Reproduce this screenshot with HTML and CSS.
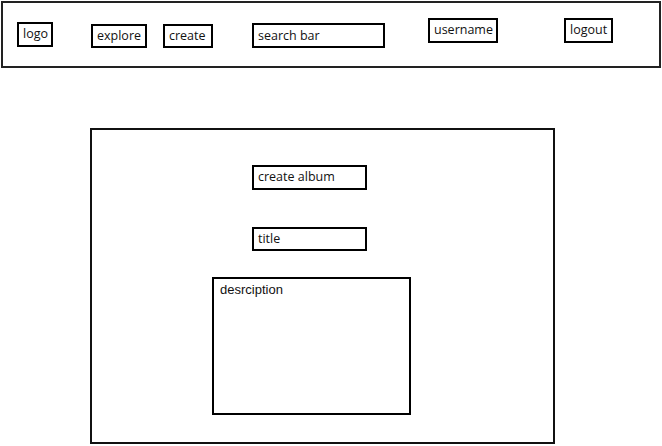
FILE: index.html
```html
<!DOCTYPE html>
<html lang="en">
<head>
    <meta charset="UTF-8">
    <meta name="viewport" content="width=device-width, initial-scale=1.0">
    <title>Create Album - Wireframe</title>
    <link rel="stylesheet" href="styles.css">
</head>
<body>
    <div class="top-bar">
        <div class="box logo">logo</div>
        <div class="box explore">explore</div>
        <div class="box create">create</div>
        <div class="box search">search bar</div>
        <div class="box username">username</div>
        <div class="box logout">logout</div>
    </div>

    <div class="album-panel">
        <div class="box album-heading">create album</div>
        <div class="box album-title">title</div>
        <div class="box album-desc">desrciption</div>
    </div>
</body>
</html>
```

FILE: styles.css
```css
* {
    margin: 0;
    padding: 0;
    box-sizing: border-box;
}

body {
    font-family: "Open Sans", "Liberation Sans", sans-serif;
    background: #fff;
    color: #111;
    width: 662px;
    height: 446px;
    overflow: hidden;
}

.box {
    border: 2px solid #000;
    background: #fff;
    font-size: 12.5px;
    font-weight: 500;
    line-height: 20px;
    padding: 0 4px;
    white-space: nowrap;
}

/* header */
.top-bar {
    display: flex;
    align-items: flex-start;
    margin: 1px 1px 0 1px;
    width: 660px;
    height: 67px;
    border: 2px solid #222;
}

.logo {
    margin: 19px 0 0 14px;
    width: 36px;
    height: 25px;
    line-height: 19px;
}

.explore {
    margin: 21px 0 0 38px;
    width: 56px;
    height: 24px;
}

.create {
    margin: 21px 0 0 16px;
    width: 50px;
    height: 24px;
}

.search {
    margin: 20px 0 0 39px;
    width: 133px;
    height: 25px;
    line-height: 21px;
}

.username {
    margin: 15px 0 0 43px;
    width: 70px;
    height: 25px;
    line-height: 20px;
}

.logout {
    margin: 15px 0 0 66px;
    width: 49px;
    height: 25px;
    line-height: 20px;
}

/* main panel */
.album-panel {
    display: flex;
    flex-direction: column;
    align-items: flex-start;
    margin: 60px 0 0 90px;
    width: 465px;
    height: 316px;
    border: 2px solid #111;
}

.album-heading {
    margin: 35px 0 0 160px;
    width: 115px;
    height: 25px;
    line-height: 20px;
}

.album-title {
    margin: 37px 0 0 160px;
    width: 115px;
    height: 24px;
}

.album-desc {
    margin: 26px 0 0 120px;
    width: 199px;
    height: 138px;
    padding: 3px 6px;
    font-family: "Liberation Sans", Arial, sans-serif;
    font-size: 13px;
    font-weight: 400;
    line-height: 16px;
}
```
